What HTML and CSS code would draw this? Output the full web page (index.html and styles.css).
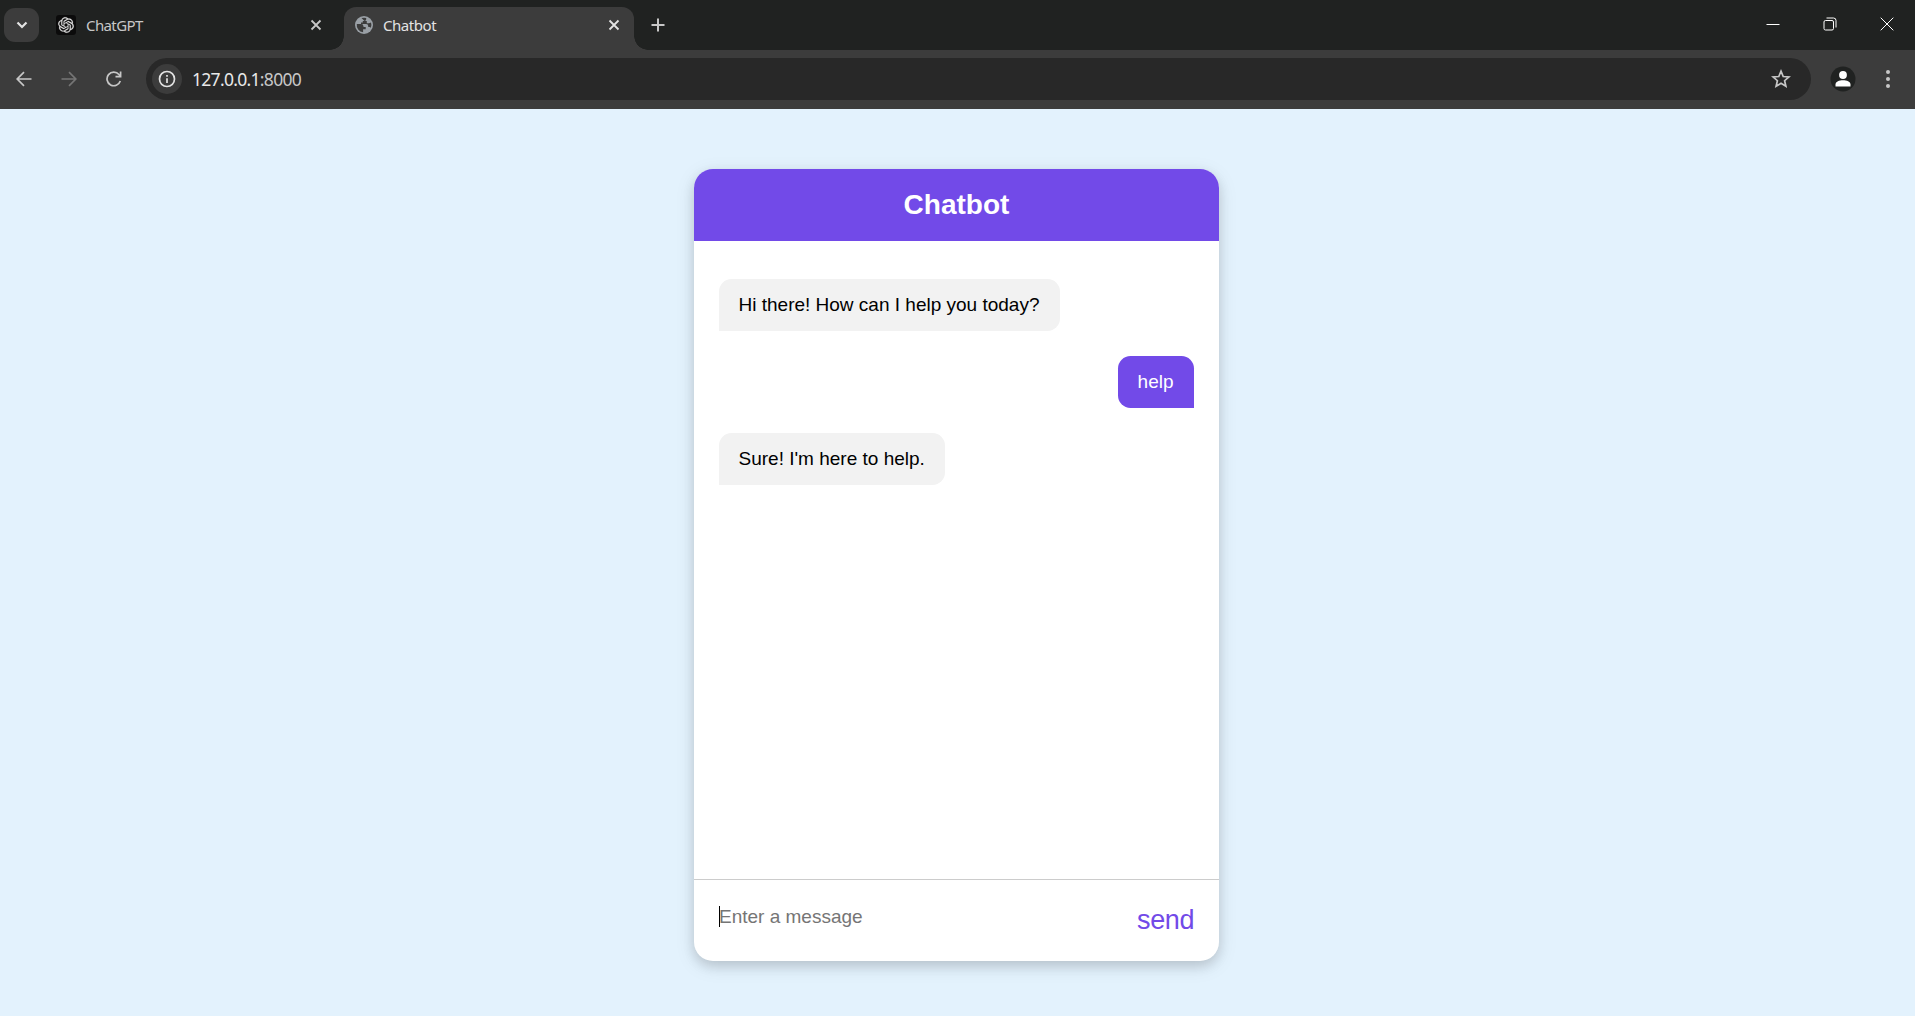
FILE: index.html
```html
<!DOCTYPE html>
<html lang="en">
<head>
<meta charset="utf-8">
<title>Chatbot</title>
<link rel="stylesheet" href="styles.css">
</head>
<body>
<header class="tabstrip">
  <button class="tab-search" aria-label="Search tabs"><svg width="12" height="8" viewBox="0 0 12 8"><path d="M1.5 1.5 6 6l4.500-4.500"/></svg></button>
  <div class="tab">
    <svg class="gpt" width="20" height="20" viewBox="0 0 20 20"><rect width="20" height="20" rx="3"/><g transform="translate(2.200 2.200) scale(.65)"><path d="M22.2819 9.8211a5.9847 5.9847 0 0 0-.5157-4.9108 6.0462 6.0462 0 0 0-6.5098-2.9A6.0651 6.0651 0 0 0 4.9807 4.1818a5.9847 5.9847 0 0 0-3.9977 2.9 6.0462 6.0462 0 0 0 .7427 7.0966 5.98 5.98 0 0 0 .511 4.9107 6.051 6.051 0 0 0 6.5146 2.9001A5.9847 5.9847 0 0 0 13.2599 24a6.0557 6.0557 0 0 0 5.7718-4.2058 5.9894 5.9894 0 0 0 3.9977-2.9001 6.0557 6.0557 0 0 0-.7475-7.073zm-9.022 12.6081a4.4755 4.4755 0 0 1-2.8764-1.0408l.1419-.0804 4.7783-2.7582a.7948.7948 0 0 0 .3927-.6813v-6.7369l2.02 1.1686a.071.071 0 0 1 .038.052v5.5826a4.504 4.504 0 0 1-4.4945 4.4944zm-9.6607-4.1254a4.4708 4.4708 0 0 1-.5346-3.0137l.142.0852 4.783 2.7582a.7712.7712 0 0 0 .7806 0l5.8428-3.3685v2.3324a.0804.0804 0 0 1-.0332.0615L9.74 19.9502a4.4992 4.4992 0 0 1-6.1408-1.6464zM2.3408 7.8956a4.485 4.485 0 0 1 2.3655-1.9728V11.6a.7664.7664 0 0 0 .3879.6765l5.8144 3.3543-2.0201 1.1685a.0757.0757 0 0 1-.071 0l-4.8303-2.7865A4.504 4.504 0 0 1 2.3408 7.872zm16.5963 3.8558L13.1038 8.364 15.1192 7.2a.0757.0757 0 0 1 .071 0l4.8303 2.7913a4.4944 4.4944 0 0 1-.6765 8.1042v-5.6772a.79.79 0 0 0-.407-.667zm2.0107-3.0231l-.142-.0852-4.7735-2.7818a.7759.7759 0 0 0-.7854 0L9.409 9.2297V6.8974a.0662.0662 0 0 1 .0284-.0615l4.8303-2.7866a4.4992 4.4992 0 0 1 6.6802 4.66zM8.3065 12.863l-2.02-1.1638a.0804.0804 0 0 1-.038-.0567V6.0742a4.4992 4.4992 0 0 1 7.3757-3.4537l-.142.0805L8.704 5.459a.7948.7948 0 0 0-.3927.6813zm1.0976-2.3654l2.602-1.4998 2.6069 1.4998v2.9994l-2.5974 1.4997-2.6067-1.4997Z"/></g></svg>
    <span class="tab-title">ChatGPT</span>
    <svg class="close" width="12" height="12" viewBox="0 0 12 12"><path d="M1.500 1.500l9 9m0-9l-9 9"/></svg>
  </div>
  <div class="tab active">
    <svg class="globe" width="18" height="18" viewBox="0 0 18 18"><circle cx="9" cy="9" r="9"/><path d="M8.100 16.300A7.300 7.300 0 0 1 1.800 8H6.100A2.400 2.400 0 0 1 8.500 10.400V11h2.200v2.200H8.100ZM6.500 2.100A7.300 7.300 0 0 1 11.200 2v1.200A1.700 1.700 0 0 1 9.500 4.900H7.800v1.700H6V8h5.200a2 2 0 0 1 2 2v1h1.300a1.500 1.500 0 0 1 1.300 1 7.500 7.500 0 0 0 .2-5.500l-2 .7h-2.200V4.900H9.500Z"/></svg>
    <span class="tab-title">Chatbot</span>
    <svg class="close" width="12" height="12" viewBox="0 0 12 12"><path d="M1.500 1.500l9 9m0-9l-9 9"/></svg>
  </div>
  <svg class="new-tab" width="14" height="14" viewBox="0 0 14 14"><path d="M7 .5v13M.5 7h13"/></svg>
  <div class="window-controls">
    <svg width="14" height="14" viewBox="0 0 14 14"><path d="M.5 7.500h13"/></svg>
    <svg width="14" height="14" viewBox="0 0 14 14"><rect x="1" y="3.500" width="9.500" height="9.500" rx="1.500"/><path d="M3.500 1H10.500A2.500 2.500 0 0 1 13 3.500V10.500"/></svg>
    <svg width="14" height="14" viewBox="0 0 14 14"><path d="M.7.7l12.600 12.600m0-12.600L.7 13.300"/></svg>
  </div>
</header>
<nav class="toolbar">
  <svg class="nav-icon" width="16" height="16" viewBox="0 0 16 16"><path d="M15.500 8H1.500M8 1.200 1.200 8 8 14.800"/></svg>
  <svg class="nav-icon disabled" width="16" height="16" viewBox="0 0 16 16"><path d="M.5 8h14M8 1.200 14.800 8 8 14.800"/></svg>
  <svg class="nav-icon" width="16" height="16" viewBox="0 0 16 16"><path d="M14.300 10A6.800 6.800 0 1 1 13 3.500L14 4.600M14.600.5V5.600H9.500"/></svg>
  <div class="omnibox">
    <span class="site-info"><svg width="18" height="18" viewBox="0 0 18 18"><circle cx="9" cy="9" r="7.500"/><path d="M9 8.200V13M9 5v1.800"/></svg></span>
    <span class="url">127.0.0.1<span class="port">:8000</span></span>
    <svg class="star" width="20" height="20" viewBox="0 0 20 20"><path d="M10 2.200l2.200 5.300 5.700.5-4.300 3.700 1.300 5.600-4.900-3-4.900 3 1.300-5.600L2.100 8l5.700-.5Z"/></svg>
  </div>
  <svg class="profile" width="26" height="26" viewBox="0 0 26 26"><circle class="disc" cx="13" cy="13" r="12.500"/><circle cx="13" cy="9" r="3.900"/><path d="M5.500 20.500V18.500C5.500 12.900 20.500 12.900 20.500 18.500V20.500Z"/></svg>
  <svg class="menu" width="4" height="20" viewBox="0 0 4 20"><circle cx="2" cy="3" r="2"/><circle cx="2" cy="10" r="2"/><circle cx="2" cy="17" r="2"/></svg>
</nav>
<main class="page">
  <section class="chatbot">
    <h1 class="chat-title">Chatbot</h1>
    <ul class="chatbox">
      <li class="message incoming">Hi there! How can I help you today?</li>
      <li class="message outgoing">help</li>
      <li class="message incoming">Sure! I'm here to help.</li>
    </ul>
    <div class="chat-input">
      <div class="field">Enter a message</div>
      <button class="send">send</button>
    </div>
  </section>
</main>
</body>
</html>
```

FILE: styles.css
```css
* { box-sizing: border-box; margin: 0; padding: 0; }
body { height: 1016px; display: flex; flex-direction: column; overflow: hidden; background: #e3f2fd; font-family: "Liberation Sans", Arial, sans-serif; }
button { border: 0; background: none; font: inherit; }
svg { display: block; flex: none; fill: none; }

.tabstrip { height: 50px; flex: none; display: flex; background: #202221; font-family: "Noto Sans", "Open Sans", sans-serif; }
.tab-search { width: 35px; height: 34px; margin: 8px 0 0 4px; border-radius: 11px; background: #3c3c3c; display: grid; place-items: center; }
.tab-search svg { stroke: #e3e3e3; stroke-width: 2.2; }
.tab { width: 290px; margin: 7px 0 0 5px; padding: 0 12px 7px 12px; display: flex; align-items: center; color: #c7c7c7; font-size: 15px; }
.tab-title { flex: 1; margin-left: 10px; padding-bottom: 1px; letter-spacing: -.6px; }
.gpt rect { fill: #0b0b0b; }
.gpt path { fill: #e4e4e4; stroke: #e4e4e4; stroke-width: .3; }
.close { stroke: #c7c7c7; stroke-width: 1.8; }
.tab.active { position: relative; width: 290px; margin-left: 10px; padding-left: 11px; padding-right: 14px; border-radius: 12px 12px 0 0; background: #3c3c3c; color: #e3e3e3; }
.tab.active .tab-title { letter-spacing: -.45px; }
.tab.active .close { stroke: #e3e3e3; }
.tab.active::before, .tab.active::after { content: ""; position: absolute; bottom: 0; width: 14px; height: 14px; }
.tab.active::before { left: -14px; background: radial-gradient(circle at 0 0, transparent 13.500px, #3c3c3c 14px); }
.tab.active::after { right: -14px; background: radial-gradient(circle at 100% 0, transparent 13.500px, #3c3c3c 14px); }
.globe circle { fill: #9aa0a6; }
.globe path { fill: #3c3c3c; }
.new-tab { margin: 18px 0 0 17px; stroke: #c7c7c7; stroke-width: 2; }
.window-controls { margin: 17px 21px 0 auto; display: flex; gap: 43px; }
.window-controls svg { stroke: #fff; stroke-width: 1; }

.toolbar { height: 59px; flex: none; display: flex; align-items: center; padding: 0 25px 1px 16px; background: #3c3c3c; }
.nav-icon { margin-right: 29px; stroke: #c7c7c7; stroke-width: 1.7; }
.nav-icon.disabled { stroke: #757575; }
.omnibox { flex: 1; height: 42px; margin: 0 19px 0 -5px; padding: 0 20px 0 6px; display: flex; align-items: center; border-radius: 21px; background: #282828; }
.site-info { width: 30px; height: 30px; border-radius: 50%; background: #3c3c3c; display: grid; place-items: center; }
.site-info svg { stroke: #e3e3e3; stroke-width: 1.7; }
.url { flex: 1; margin-left: 10px; color: #e8e8e8; font: 17.500px "Noto Sans", "Open Sans", sans-serif; letter-spacing: -.7px; }
.port { color: #c7c7c7; }
.star { stroke: #c7c7c7; stroke-width: 1.7; }
.profile { fill: #fff; }
.profile .disc { fill: #202221; }
.menu { margin-left: 30px; fill: #c7c7c7; }

.page { flex: 1; padding-top: 60px; display: flex; justify-content: center; align-items: flex-start; }
.chatbot { width: 525px; height: 792px; margin-right: 2px; display: flex; flex-direction: column; border-radius: 19px; overflow: hidden; background: #fff; box-shadow: 0 5px 12px rgba(0,0,0,.12), 0 5px 20px rgba(0,0,0,.1); }
.chat-title { height: 72px; flex: none; background: #724ae8; color: #fff; font-size: 28px; line-height: 71px; text-align: center; }
.chatbox { flex: 1; display: flex; flex-direction: column; gap: 25px; padding: 38px 25px 0; list-style: none; }
.message { height: 52px; padding: 0 20.500px 0 19.500px; font-size: 19px; line-height: 51px; white-space: nowrap; }
.incoming { align-self: flex-start; border-radius: 12.500px 12.500px 12.500px 0; background: #f2f2f2; color: #000; }
.outgoing { align-self: flex-end; border-radius: 12.500px 12.500px 0 12.500px; background: #724ae8; color: #fff; }
.chat-input { height: 82px; flex: none; display: flex; justify-content: space-between; align-items: flex-start; border-top: 1px solid #ccc; padding: 0 25px; }
.field { position: relative; margin-top: 26px; color: #757575; font-size: 19px; line-height: 21px; }
.field::before { content: ""; position: absolute; left: 0; top: 0; width: 1px; height: 21px; background: #000; }
.send { margin-top: 25px; color: #724ae8; font-size: 27px; line-height: 30px; letter-spacing: -.4px; }
```
